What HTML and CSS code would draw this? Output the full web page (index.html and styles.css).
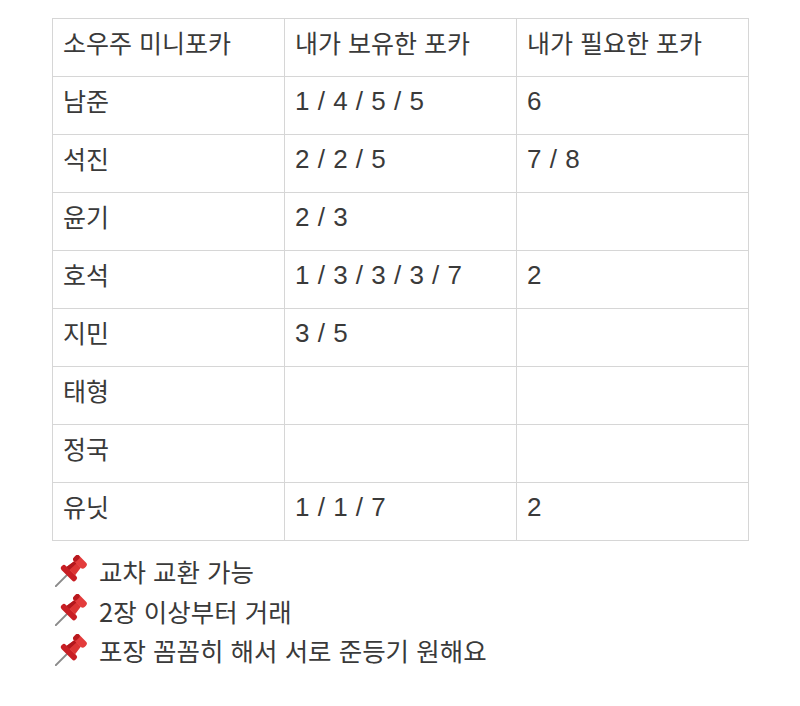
FILE: index.html
```html
<!DOCTYPE html>
<html lang="ko">
<head>
<meta charset="utf-8">
<link rel="stylesheet" href="styles.css">
</head>
<body>
<div class="page">
  <table class="cards">
    <colgroup><col class="c"><col class="c"><col class="c"></colgroup>
    <tr><td>소우주 미니포카</td><td>내가 보유한 포카</td><td>내가 필요한 포카</td></tr>
    <tr><td>남준</td><td class="num">1 / 4 / 5 / 5</td><td class="num">6</td></tr>
    <tr><td>석진</td><td class="num">2 / 2 / 5</td><td class="num">7 / 8</td></tr>
    <tr><td>윤기</td><td class="num">2 / 3</td><td class="num"></td></tr>
    <tr><td>호석</td><td class="num">1 / 3 / 3 / 3 / 7</td><td class="num">2</td></tr>
    <tr><td>지민</td><td class="num">3 / 5</td><td class="num"></td></tr>
    <tr><td>태형</td><td class="num"></td><td class="num"></td></tr>
    <tr><td>정국</td><td class="num"></td><td class="num"></td></tr>
    <tr><td>유닛</td><td class="num">1 / 1 / 7</td><td class="num">2</td></tr>
  </table>
  <ul class="notes">
    <li><svg class="pin" viewBox="0 0 32 32" width="32" height="32" aria-hidden="true"><g transform="translate(27,5) rotate(45)"><line x1="0" y1="20" x2="0" y2="37" stroke="#8a8a8a" stroke-width="2" stroke-linecap="round"/><rect x="-10" y="15.5" width="20" height="6" rx="2.5" fill="#c81e24"/><path d="M-4.5 6 L4.5 6 L6 16 L-6 16 Z" fill="#dc3433"/><path d="M-4.5 6 L-1.5 6 L-2 16 L-6 16 Z" fill="#b3171c"/><rect x="-7.5" y="-1" width="15" height="7.5" rx="3" fill="#e33c3c"/><rect x="-7.5" y="-1" width="4.5" height="7.5" rx="2.5" fill="#b8191e"/></g></svg><span>교차 교환 가능</span></li>
    <li><svg class="pin" viewBox="0 0 32 32" width="32" height="32" aria-hidden="true"><g transform="translate(27,5) rotate(45)"><line x1="0" y1="20" x2="0" y2="37" stroke="#8a8a8a" stroke-width="2" stroke-linecap="round"/><rect x="-10" y="15.5" width="20" height="6" rx="2.5" fill="#c81e24"/><path d="M-4.5 6 L4.5 6 L6 16 L-6 16 Z" fill="#dc3433"/><path d="M-4.5 6 L-1.5 6 L-2 16 L-6 16 Z" fill="#b3171c"/><rect x="-7.5" y="-1" width="15" height="7.5" rx="3" fill="#e33c3c"/><rect x="-7.5" y="-1" width="4.5" height="7.5" rx="2.5" fill="#b8191e"/></g></svg><span>2장 이상부터 거래</span></li>
    <li><svg class="pin" viewBox="0 0 32 32" width="32" height="32" aria-hidden="true"><g transform="translate(27,5) rotate(45)"><line x1="0" y1="20" x2="0" y2="37" stroke="#8a8a8a" stroke-width="2" stroke-linecap="round"/><rect x="-10" y="15.5" width="20" height="6" rx="2.5" fill="#c81e24"/><path d="M-4.5 6 L4.5 6 L6 16 L-6 16 Z" fill="#dc3433"/><path d="M-4.5 6 L-1.5 6 L-2 16 L-6 16 Z" fill="#b3171c"/><rect x="-7.5" y="-1" width="15" height="7.5" rx="3" fill="#e33c3c"/><rect x="-7.5" y="-1" width="4.5" height="7.5" rx="2.5" fill="#b8191e"/></g></svg><span>포장 꼼꼼히 해서 서로 준등기 원해요</span></li>
  </ul>
</div>
</body>
</html>
```
FILE: styles.css
```css
html, body {
  margin: 0;
  background: #ffffff;
}
body {
  font-family: "Noto Sans CJK KR", "Noto Sans", sans-serif;
  color: #3a3a3a;
}
.page {
  padding: 18px 52px 0 52px;
}
.cards {
  width: 697px;
  border-collapse: collapse;
  table-layout: fixed;
}
.cards .c {
  width: 232px;
}
.cards td {
  border: 1px solid #d6d6d6;
  height: 58px;
  box-sizing: border-box;
  padding: 8px 10px 0 10px;
  vertical-align: top;
  font-size: 25px;
  line-height: 30px;
}
.cards td.num {
  font-family: "Liberation Sans", "Noto Sans CJK KR", sans-serif;
  font-size: 26px;
  letter-spacing: 0.5px;
  padding-top: 9px;
}
.notes {
  list-style: none;
  margin: 0;
  padding: 10px 0 0 3px;
}
.notes li {
  display: flex;
  align-items: center;
  gap: 12px;
  height: 39.5px;
  font-size: 25.5px;
}
.pin {
  flex: none;
}
```
